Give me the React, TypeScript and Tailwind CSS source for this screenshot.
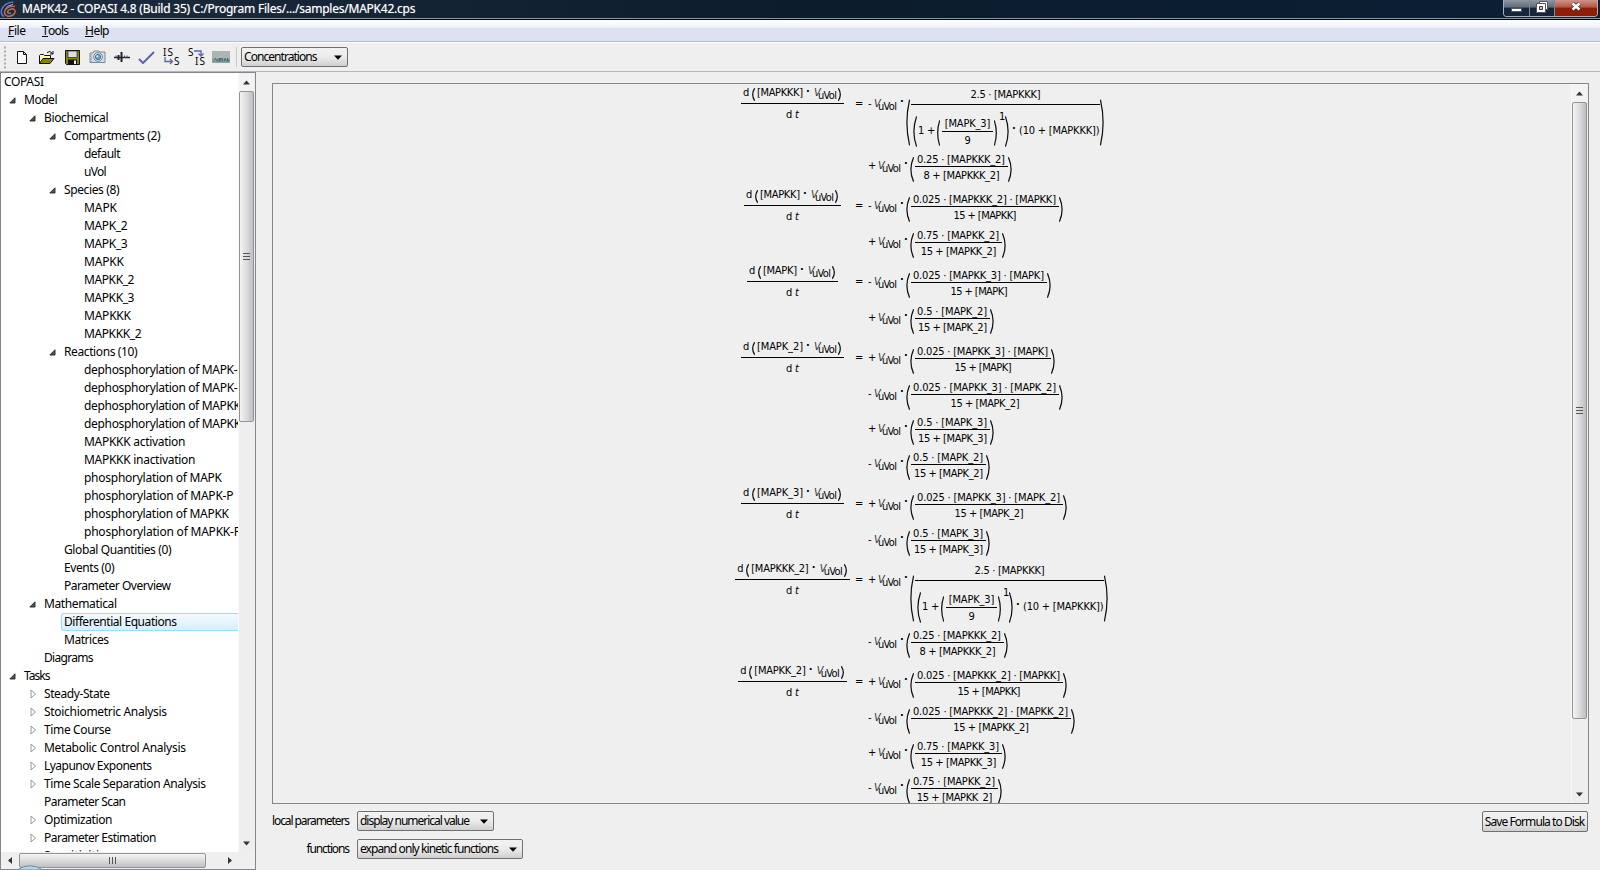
import { useLayoutEffect, useRef, type ReactNode } from "react";

/** Text set to an exact advance width by adjusting its tracking. */
function T({ w, c = "", children }: { w: number; c?: string; children: string }) {
  const ref = useRef<HTMLSpanElement>(null);
  useLayoutEffect(() => {
    const el = ref.current;
    if (!el) return;
    el.style.letterSpacing = "0px";
    const range = document.createRange();
    range.selectNodeContents(el);
    const natural = range.getBoundingClientRect().width;
    el.style.letterSpacing = `${(w - natural) / Math.max(1, children.length - 1)}px`;
  }, [w, children]);
  return (
    <span ref={ref} className={`block shrink-0 whitespace-pre ${c}`} style={{ width: w }}>
      {children}
    </span>
  );
}

type Node = [level: number, label: string, width: number, state?: "open" | "closed" | "selected"];

const tree: Node[] = [
  [0, "COPASI", 40],
  [1, "Model", 33.5, "open"],
  [2, "Biochemical", 64.5, "open"],
  [3, "Compartments (2)", 96.5, "open"],
  [4, "default", 36.5],
  [4, "uVol", 22.5],
  [3, "Species (8)", 55.5, "open"],
  [4, "MAPK", 33],
  [4, "MAPK_2", 43.5],
  [4, "MAPK_3", 43.5],
  [4, "MAPKK", 40],
  [4, "MAPKK_2", 50.5],
  [4, "MAPKK_3", 50.5],
  [4, "MAPKKK", 47],
  [4, "MAPKKK_2", 57.5],
  [3, "Reactions (10)", 73.5, "open"],
  [4, "dephosphorylation of MAPK-P", 160.5],
  [4, "dephosphorylation of MAPK-PP", 167.5],
  [4, "dephosphorylation of MAPKK-P", 167.5],
  [4, "dephosphorylation of MAPKK-PP", 174.5],
  [4, "MAPKKK activation", 101.5],
  [4, "MAPKKK inactivation", 111.5],
  [4, "phosphorylation of MAPK", 138],
  [4, "phosphorylation of MAPK-P", 149.5],
  [4, "phosphorylation of MAPKK", 145],
  [4, "phosphorylation of MAPKK-P", 157],
  [3, "Global Quantities (0)", 107.5],
  [3, "Events (0)", 50.5],
  [3, "Parameter Overview", 107],
  [2, "Mathematical", 73, "open"],
  [3, "Differential Equations", 113, "selected"],
  [3, "Matrices", 45],
  [2, "Diagrams", 49.5],
  [1, "Tasks", 26.5, "open"],
  [2, "Steady-State", 66, "closed"],
  [2, "Stoichiometric Analysis", 123, "closed"],
  [2, "Time Course", 67, "closed"],
  [2, "Metabolic Control Analysis", 142, "closed"],
  [2, "Lyapunov Exponents", 108, "closed"],
  [2, "Time Scale Separation Analysis", 162, "closed"],
  [2, "Parameter Scan", 82],
  [2, "Optimization", 68.5, "closed"],
  [2, "Parameter Estimation", 112.5, "closed"],
  [2, "Sensitivities", 68],
];

const indents = ["w-[0px]", "w-[4px]", "w-[24px]", "w-[44px]", "w-[64px]"];

function TreeRow({ node: [level, label, width, state] }: { node: Node }) {
  return (
    <div className="flex h-[18px] shrink-0 items-center">
      <div className={`${indents[level]} shrink-0`} />
      {level > 0 && (
        <div className="flex w-4 shrink-0 pl-1">
          {state === "open" && (
            <svg width="7" height="7" viewBox="0 0 7 7">
              <path d="M6 .8V6H.8Z" fill="#555" stroke="#222" strokeWidth=".9" />
            </svg>
          )}
          {state === "closed" && (
            <svg width="8" height="10" viewBox="0 0 8 10" className="ml-px">
              <path d="M1 1v8l4.500-4Z" fill="#fff" stroke="#999" />
            </svg>
          )}
        </div>
      )}
      {state === "selected" ? (
        <div className="flex h-[18px] flex-1 items-center rounded-l-[3px] border border-r-0 border-[#99defd] bg-linear-to-b from-[#f4fafe] to-[#d6effc] pl-[2px]">
          <T w={width}>{label}</T>
        </div>
      ) : (
        <T w={width} c="ml-[3px]">{label}</T>
      )}
    </div>
  );
}

function Arrow({ dir }: { dir: "up" | "down" | "left" | "right" }) {
  const d = { up: "M0 5.500L3.500 1.500 7 5.500Z", down: "M0 1.500L3.500 5.500 7 1.500Z", left: "M5 0L1 3.500 5 7Z", right: "M2 0L6 3.500 2 7Z" }[dir];
  return (
    <svg width="7" height="7" viewBox="0 0 7 7" className="shrink-0">
      <path d={d} fill="#333" />
    </svg>
  );
}

function VScroll({ thumb }: { thumb: string }) {
  return (
    <div className="flex w-[17px] shrink-0 flex-col items-start border-l border-[#f9f9f9] bg-[#eeeeee]">
      <div className="flex h-[18px] w-[15px] shrink-0 items-center justify-center bg-[#f3f3f3]"><Arrow dir="up" /></div>
      <div className={`flex ${thumb} w-[15px] shrink-0 flex-col items-center justify-center gap-[2px] rounded-[2px] border border-[#949494] bg-linear-to-r from-[#f4f4f4] via-[#dcdcde] to-[#bfbfc4]`}>
        <div className="h-px w-[7px] bg-[#555]" />
        <div className="h-px w-[7px] bg-[#555]" />
        <div className="h-px w-[7px] bg-[#555]" />
      </div>
      <div className="flex-1" />
      <div className="flex h-[18px] w-[15px] shrink-0 items-center justify-center"><Arrow dir="down" /></div>
    </div>
  );
}

function Combo({ label, w, box }: { label: string; w: number; box: string }) {
  return (
    <div className={`flex h-5 ${box} items-center justify-between rounded-[2px] border border-[#707070] bg-linear-to-b from-[#f2f2f2] from-0% via-[#ebebeb] via-50% to-[#cfcfcf] pl-[2px] pr-[5px]`}>
      <T w={w}>{label}</T>
      <svg width="8" height="5" viewBox="0 0 8 5"><path d="M0 .5h8L4 4.700Z" fill="#000" /></svg>
    </div>
  );
}

function Paren({ side, c }: { side: "l" | "r"; c: string }) {
  return (
    <svg viewBox="0 0 4 20" preserveAspectRatio="none" className={`shrink-0 ${c}`}>
      <path
        d={side === "l" ? "M3.600 .3Q-1.800 10 3.600 19.700" : "M.4 .3Q5.800 10 .4 19.700"}
        fill="none"
        stroke="#111"
        strokeWidth="1.250"
        vectorEffect="non-scaling-stroke"
      />
    </svg>
  );
}

function Volume({ c }: { c: string }) {
  return (
    <div className={`flex w-[23px] shrink-0 ${c}`}>
      <T w={5} c="italic text-[#333]">V</T>
      <T w={19} c="-ml-px mt-[3px]">uVol</T>
    </div>
  );
}

function Dot({ c }: { c: string }) {
  return <T w={2} c={`-indent-px font-bold ${c}`}>·</T>;
}

type Term = { h: string; lhs?: [string, number]; sign: "+" | "-"; num?: [string, number]; den?: [string, number] };

const K = {
  kk3k: ["0.025 · [MAPKK_3] · [MAPK]", 131] as [string, number],
  kk3k2: ["0.025 · [MAPKK_3] · [MAPK_2]", 143] as [string, number],
  d15k: ["15 + [MAPK]", 57] as [string, number],
  d15k2: ["15 + [MAPK_2]", 69] as [string, number],
  d15kk2: ["15 + [MAPKK_2]", 75.5] as [string, number],
};

const terms: Term[] = [
  { h: "h-[62px]", lhs: ["[MAPKKK]", 46], sign: "-" },
  { h: "h-[40px]", sign: "+", num: ["0.25 · [MAPKKK_2]", 88], den: ["8 + [MAPKKK_2]", 76] },
  { h: "h-[36px]", lhs: ["[MAPKK]", 40], sign: "-", num: ["0.025 · [MAPKKK_2] · [MAPKK]", 143], den: ["15 + [MAPKK]", 63] },
  { h: "h-[40px]", sign: "+", num: ["0.75 · [MAPKK_2]", 82], den: K.d15kk2 },
  { h: "h-[36px]", lhs: ["[MAPK]", 34], sign: "-", num: K.kk3k, den: K.d15k },
  { h: "h-[40px]", sign: "+", num: ["0.5 · [MAPK_2]", 70], den: K.d15k2 },
  { h: "h-[36px]", lhs: ["[MAPK_2]", 46], sign: "+", num: K.kk3k, den: K.d15k },
  { h: "h-[35px]", sign: "-", num: K.kk3k2, den: K.d15k2 },
  { h: "h-[35px]", sign: "+", num: ["0.5 · [MAPK_3]", 70], den: ["15 + [MAPK_3]", 69] },
  { h: "h-[40px]", sign: "-", num: ["0.5 · [MAPK_2]", 70], den: K.d15k2 },
  { h: "h-[36px]", lhs: ["[MAPK_3]", 46], sign: "+", num: K.kk3k2, den: K.d15k2 },
  { h: "h-[40px]", sign: "-", num: ["0.5 · [MAPK_3]", 70], den: ["15 + [MAPK_3]", 69] },
  { h: "h-[62px]", lhs: ["[MAPKKK_2]", 57.5], sign: "+" },
  { h: "h-[40px]", sign: "-", num: ["0.25 · [MAPKKK_2]", 88], den: ["8 + [MAPKKK_2]", 76] },
  { h: "h-[36px]", lhs: ["[MAPKK_2]", 51.5], sign: "+", num: ["0.025 · [MAPKKK_2] · [MAPKK]", 143], den: ["15 + [MAPKK]", 63] },
  { h: "h-[35px]", sign: "-", num: ["0.025 · [MAPKKK_2] · [MAPKK_2]", 155], den: K.d15kk2 },
  { h: "h-[35px]", sign: "+", num: ["0.75 · [MAPKK_3]", 82], den: ["15 + [MAPKK_3]", 75.5] },
  { h: "h-[36px]", sign: "-", num: ["0.75 · [MAPKK_2]", 82], den: K.d15kk2 },
];

function Lhs({ name, w }: { name: string; w: number }) {
  return (
    <div className="flex flex-col items-center">
      <div className="flex h-[20px] items-start border-b border-black pl-[2px] pr-[3px]">
        <T w={6} c="mt-[2px]">d</T>
        <Paren side="l" c="ml-[3px] mt-[4px] h-[13px] w-[3px]" />
        <T w={w} c="ml-[2px] mt-[2px]">{name}</T>
        <Dot c="ml-[4px] mt-px" />
        <Volume c="ml-[5px] mt-[2px]" />
        <Paren side="r" c="ml-[1px] mt-[4px] h-[13px] w-[3px]" />
      </div>
      <div className="mt-[4px] flex gap-[3px]">
        <T w={6}>d</T>
        <T w={4} c="italic">t</T>
      </div>
    </div>
  );
}

function Hill() {
  return (
    <>
      <Paren side="l" c="mt-[15px] h-[47px] w-[4px]" />
      <div className="ml-px flex w-[189px] shrink-0 flex-col">
        <div className="flex h-[21px] justify-center border-b border-black pt-[4px]">
          <T w={70}>2.5 · [MAPKKK]</T>
        </div>
        <div className="flex items-start">
          <Paren side="l" c="ml-[2px] mt-[11px] h-[31px] w-[4px]" />
          <T w={5} c="ml-[1px] mt-[19px]">1</T>
          <T w={7} c="ml-[4px] mt-[19px]">+</T>
          <Paren side="l" c="ml-[3px] mt-[15px] h-[26px] w-[3px]" />
          <div className="ml-[2px] mt-[12px] flex w-[51px] flex-col items-center">
            <div className="flex h-[15px] w-full justify-center border-b border-black"><T w={45.5}>[MAPK_3]</T></div>
            <T w={6} c="mt-[2px]">9</T>
          </div>
          <Paren side="r" c="ml-[1px] mt-[15px] h-[26px] w-[3px]" />
          <T w={5} c="ml-[2px] mt-[5px]">1</T>
          <Paren side="r" c="ml-px mt-[11px] h-[31px] w-[4px]" />
          <Dot c="ml-[4px] mt-[17px]" />
          <T w={80.5} c="ml-[4px] mt-[19px]">(10 + [MAPKKK])</T>
        </div>
      </div>
      <Paren side="r" c="mt-[15px] h-[47px] w-[4px]" />
    </>
  );
}

function TermRow({ term }: { term: Term }) {
  const { h, lhs, sign, num, den } = term;
  return (
    <div className={`flex ${h} shrink-0 items-start`}>
      <div className="flex w-[115px] shrink-0 justify-center">{lhs && <Lhs name={lhs[0]} w={lhs[1]} />}</div>
      <div className="w-[18px] shrink-0 pl-[5px] pt-[13px]">{lhs && <T w={7}>=</T>}</div>
      <div className={sign === "+" ? "w-[10px] shrink-0 pt-[13px]" : "w-[6px] shrink-0 pt-[13px]"}>
        <T w={sign === "+" ? 7 : 4}>{sign}</T>
      </div>
      <Volume c="mt-[13px]" />
      <Dot c="ml-[4px] mt-[11px]" />
      <div className="w-[3px] shrink-0" />
      {num && den ? (
        <>
          <Paren side="l" c="mt-[11px] h-[25px] w-[4px]" />
          <div className="ml-px flex flex-col">
            <div className="flex h-[21px] border-b border-black pl-[2px] pr-[3px] pt-[7px]"><T w={num[1]}>{num[0]}</T></div>
            <div className="mt-[2px] flex justify-center"><T w={den[1]}>{den[0]}</T></div>
          </div>
          <Paren side="r" c="mt-[11px] h-[25px] w-[4px]" />
        </>
      ) : (
        <Hill />
      )}
    </div>
  );
}

function Slot({ children, c }: { children: ReactNode; c: string }) {
  return <div className={`flex h-[18px] shrink-0 items-center justify-center ${c}`}>{children}</div>;
}

function Toolbar() {
  return (
    <div className="flex h-[29px] shrink-0 items-center border-b border-[#b5b5b5] bg-[#efefef]">
      <svg width="4" height="24" viewBox="0 0 4 24" className="ml-[3px]">
        <path d="M2 1.500v22" stroke="#aaa" strokeWidth="2" strokeDasharray="2 2" />
      </svg>
      <Slot c="ml-[7px] w-4">
        <svg width="12" height="15" viewBox="0 0 12 15"><path d="M1.500 1.500h6l3 3v9h-9ZM7.500 1.500v3h3" fill="#fff" stroke="#111" /></svg>
      </Slot>
      <Slot c="ml-[8px] w-[18px]">
        <svg width="18" height="15" viewBox="0 0 18 15">
          <path d="M1.500 13.500v-8l1-1h3l1 1h6v3" fill="#ffff9c" stroke="#111" />
          <path d="M1.500 13.500l3.500-5h11l-4 5Z" fill="#84840c" stroke="#111" />
          <path d="M9 2.500q3-2.500 5.500 1M15 1v3h-3" fill="none" stroke="#111" />
        </svg>
      </Slot>
      <Slot c="ml-[8px] w-4">
        <svg width="15" height="15" viewBox="0 0 15 15">
          <path d="M.5.5h14v14h-13l-1-1Z" fill="#84840c" stroke="#111" />
          <path d="M3 1h9v6.500H3Z" fill="#dedede" stroke="#222" strokeWidth=".7" />
          <path d="M3 9.500h9V14H3Z" fill="#111" /><path d="M9 10.500h2V14H9Z" fill="#eee" />
        </svg>
      </Slot>
      <Slot c="ml-[8px] w-[18px]">
        <svg width="17" height="14" viewBox="0 0 17 14">
          <path d="M1 3h3l1-2h5l1 1h5v10.500H1Z" fill="#d5dce5" stroke="#7a8794" />
          <path d="M2 3v9" stroke="#9aa8b8" />
          <circle cx="9" cy="7" r="4.300" fill="#e9f0f6" stroke="#6c7e90" />
          <circle cx="9" cy="7" r="2.600" fill="#6aa6d4" stroke="#3f6f95" />
          <circle cx="8.300" cy="6.200" r="1" fill="#dff1ff" />
        </svg>
      </Slot>
      <Slot c="ml-[7px] w-[17px]">
        <svg width="16" height="10" viewBox="0 0 16 10">
          <path d="M0 5.500h16" stroke="#223" strokeWidth="1.500" />
          <path d="M4.500 3v5M7.500 0v10" stroke="#223" strokeWidth="2" /><path d="M2 3.500v2M10.500 3.500v2M13 3.500v2" stroke="#556" />
        </svg>
      </Slot>
      <Slot c="ml-[8px] w-[17px]">
        <svg width="17" height="13" viewBox="0 0 17 13"><path d="M1 8l4 4L16 1" fill="none" stroke="#5a63b4" strokeWidth="2" /></svg>
      </Slot>
      <div className="ml-[8px] flex w-[18px] shrink-0 flex-col text-[10px] leading-[9px]">
        <T w={10}>IS</T>
        <div className="flex h-[9px]">
          <svg width="10" height="9" viewBox="0 0 10 9" className="ml-px"><path d="M1 0v4.500h7M6 2l2.500 2.500L6 7" fill="none" stroke="#5a63b4" strokeWidth="1.300" /></svg>
          <T w={6}>S</T>
        </div>
      </div>
      <div className="ml-[7px] flex w-[18px] shrink-0 flex-col text-[10px] leading-[9px]">
        <div className="flex h-[9px]">
          <T w={6}>S</T>
          <svg width="10" height="9" viewBox="0 0 10 9"><path d="M0 3h7v5M4.500 5.500L7 8l2.500-2.500" fill="none" stroke="#5a63b4" strokeWidth="1.300" /></svg>
        </div>
        <T w={10} c="ml-[7px]">IS</T>
      </div>
      <Slot c="ml-[6px] w-[18px]">
        <svg width="18" height="12" viewBox="0 0 18 12">
          <path d="M0 0h18v12H0Z" fill="#a9b6b4" /><path d="M0 7h18v5H0Z" fill="#8fa3a3" />
          <path d="M1 10L17 0" stroke="#cdb4ba" strokeWidth=".8" />
          <path d="M1.500 10.500l2-3 1.500 3M6 10.500v-3M7.500 10.500v-3h2l-1.500 3M10.500 10.500v-3M12 10.500l1-3 1.500 3M15.500 10.500v-3l1.500 3" fill="none" stroke="#38686a" strokeWidth=".9" />
        </svg>
      </Slot>
      <div className="ml-[6px] mr-[3px] h-5 w-px bg-[#c8c8c8]" />
      <div className="pl-px"><Combo label="Concentrations" w={73.5} box="w-[107px]" /></div>
    </div>
  );
}

export default function App() {
  return (
    <div className="relative flex h-[870px] w-[1600px] flex-col overflow-hidden bg-[#efefef] font-['Noto_Sans','Open_Sans',sans-serif] text-[12px] leading-[16px] text-black">
      <div className="flex h-5 shrink-0 items-start justify-between border-b border-black bg-linear-to-r from-[#1c2c3c] via-[#0c1c2c] to-[#0b1f35]">
        <div className="flex h-[19px] flex-1 items-center border-b border-[#8796a3]">
          <svg width="17" height="17" viewBox="0 0 17 17" fill="none" className="mr-1">
            <path d="M13.500 1Q5 1.500 1.800 8 0 13 4 15.500" stroke="#5f76b0" strokeWidth="1.500" />
            <path d="M13 3.500Q7.500 4 5 8.500" stroke="#c9d2e8" strokeWidth=".9" />
            <path d="M15 5.500Q8 4.500 5 9.500 3.500 13 7 15 12 16 14.500 12.500 16.500 8.500 12.500 7.800 8.500 8.200 7.500 11 8 13 11 12" stroke="#c9684f" strokeWidth="1.400" />
          </svg>
          <T w={393.5} c="ml-[1px] text-white [text-shadow:0_0_1px_#fff8]">MAPK42 - COPASI 4.8 (Build 35) C:/Program Files/.../samples/MAPK42.cps</T>
        </div>
        <div className="flex h-[19px] items-start border-b border-[#8796a3] pr-[2px]">
          <div className="flex h-[17px] overflow-hidden rounded-b-[4px] border border-t-0 border-[#a5b0ba]">
            <div className="flex w-[26px] items-center justify-center border-r border-[#7c8894] bg-linear-to-b from-[#8d98a3] from-0% via-[#5e6b79] via-45% to-[#15263a] to-50%">
              <div className="mt-[3px] h-[4px] w-[11px] border border-[#556] bg-white" />
            </div>
            <div className="flex w-[25px] items-center justify-center border-r border-[#7c8894] bg-linear-to-b from-[#8d98a3] from-0% via-[#5e6b79] via-45% to-[#15263a] to-50%">
              <svg width="12" height="12" viewBox="0 0 12 12" className="-mt-[3px]"><path d="M3.500.5h8v8h-8Z" fill="#fff" stroke="#556" /><path d="M.5 2.500h9v9h-9Z" fill="#fff" stroke="#556" /><path d="M3.500 5.500h3v3h-3Z" fill="#ccc" stroke="#334" /></svg>
            </div>
            <div className="flex w-[42px] items-center justify-center bg-linear-to-b from-[#cf9488] from-0% via-[#b4543f] via-45% to-[#8f1d08] to-50%">
              <svg width="12" height="11" viewBox="0 0 12 11" className="-mt-[3px]"><path d="M2.500 2.500l7 6M9.500 2.500l-7 6" stroke="#534" strokeWidth="4.200" /><path d="M2.500 2.500l7 6M9.500 2.500l-7 6" stroke="#fff" strokeWidth="2.600" /></svg>
            </div>
          </div>
        </div>
      </div>

      <div className="flex h-[22px] shrink-0 items-center border-b border-[#b5bccb] bg-linear-to-b from-white from-0% via-[#eef1f8] via-35% to-[#dde2f2] to-40% pl-2">
        <div className="flex"><T w={6} c="underline">F</T><T w={12}>ile</T></div>
        <div className="ml-4 flex"><T w={6} c="underline">T</T><T w={21}>ools</T></div>
        <div className="ml-4 flex"><T w={8.5} c="underline">H</T><T w={16}>elp</T></div>
      </div>
      <div className="h-px shrink-0 bg-white" />
      <Toolbar />

      <div className="flex min-h-0 flex-1">
        <div className="flex w-[256px] shrink-0 flex-col border border-[#828790] bg-white">
          <div className="flex min-h-0 flex-1">
            <div className="flex w-[237px] shrink-0 flex-col overflow-hidden">
              {tree.map((n, i) => <TreeRow key={i} node={n} />)}
            </div>
            <VScroll thumb="h-[331px]" />
          </div>
          <div className="flex h-[17px] shrink-0 items-center bg-[#efefef]">
            <div className="flex w-[18px] justify-center"><Arrow dir="left" /></div>
            <div className="flex h-[15px] w-[187px] items-center justify-center gap-[2px] rounded-[2px] border border-[#949494] bg-linear-to-b from-[#f4f4f4] via-[#dcdcde] to-[#bfbfc4]">
              <div className="h-[7px] w-px bg-[#555]" />
              <div className="h-[7px] w-px bg-[#555]" />
              <div className="h-[7px] w-px bg-[#555]" />
            </div>
            <div className="ml-5"><Arrow dir="right" /></div>
          </div>
        </div>

        <div className="flex flex-1 flex-col pl-4 pr-[11px] pt-[11px]">
          <div className="flex h-[721px] shrink-0 border border-[#828790]">
            <div className="flex flex-1 flex-col overflow-hidden pl-[462px] font-['DejaVu_Sans_Condensed','DejaVu_Sans',sans-serif] text-[11px] leading-[14px] [font-stretch:condensed]">
              {terms.map((t, i) => <TermRow key={i} term={t} />)}
            </div>
            <VScroll thumb="h-[617px]" />
          </div>
          <div className="flex items-start justify-between pt-[7px]">
            <div className="flex flex-col gap-2">
              <div className="flex items-center">
                <div className="flex w-[78px] justify-end"><T w={78}>local parameters</T></div>
                <div className="w-[7px]" />
                <Combo label="display numerical value" w={110} box="w-[137px]" />
              </div>
              <div className="flex items-center">
                <div className="flex w-[78px] justify-end"><T w={43.5}>functions</T></div>
                <div className="w-[7px]" />
                <Combo label="expand only kinetic functions" w={139} box="w-[166px]" />
              </div>
            </div>
            <div className="mr-px flex h-[21px] w-[106px] items-center justify-center rounded-[2px] border border-[#707070] bg-linear-to-b from-[#f2f2f2] from-0% via-[#ebebeb] via-50% to-[#cfcfcf]">
              <T w={100.5}>Save Formula to Disk</T>
            </div>
          </div>
        </div>
      </div>

      <svg width="28" height="5" viewBox="0 0 28 5" className="absolute bottom-0 left-4">
        <path d="M1 5Q14-3.500 27 5Z" fill="#b9d3e6" stroke="#5f8fb5" />
      </svg>
    </div>
  );
}
